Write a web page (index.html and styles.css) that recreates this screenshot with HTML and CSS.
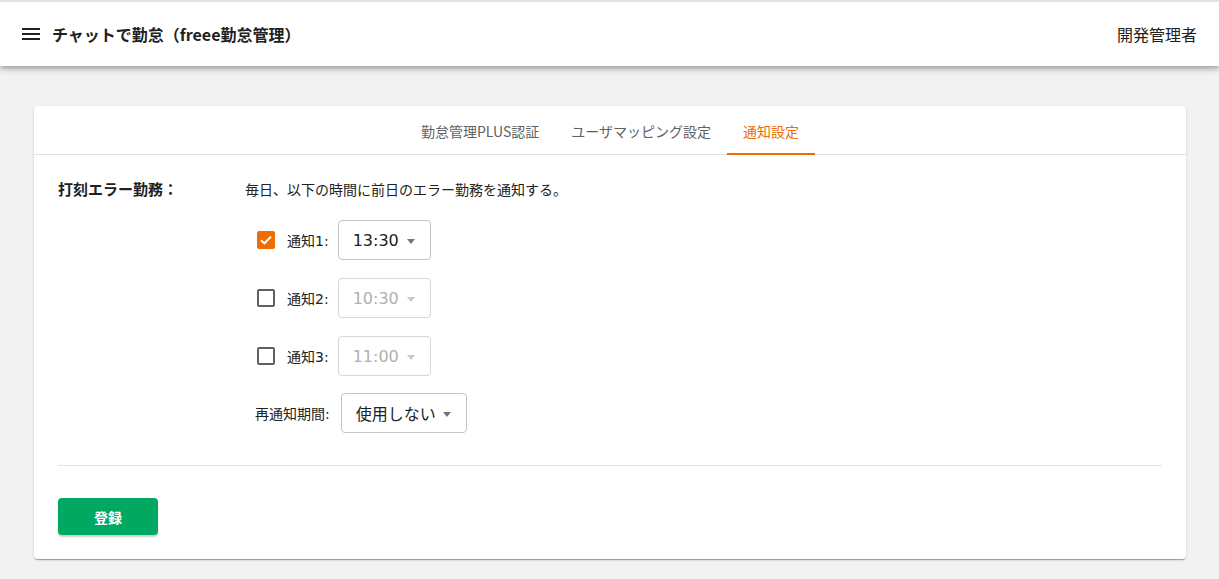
FILE: index.html
```html
<!doctype html>
<html lang="ja">
<head>
	<meta charset="UTF-8">
	<title>チャットで勤怠</title>
	<link rel="stylesheet" href="styles.css">
</head>
<body>
<header class="topbar">
	<div class="topbar_left">
		<span class="menu_icon">
			<svg width="18" height="12" viewBox="0 0 18 12"><rect x="0" y="0" width="18" height="2" fill="#212121"/><rect x="0" y="5" width="18" height="2" fill="#212121"/><rect x="0" y="10" width="18" height="2" fill="#212121"/></svg>
		</span>
		<h1 class="title">チャットで勤怠（freee勤怠管理）</h1>
	</div>
	<div class="user">開発管理者</div>
</header>

<main class="page">
	<div class="card">
		<nav class="tabs">
			<a class="tab">勤怠管理PLUS認証</a>
			<a class="tab">ユーザマッピング設定</a>
			<a class="tab active">通知設定</a>
		</nav>
		<div class="card_body">
			<div class="section">
				<div class="section_label">打刻エラー勤務：</div>
				<div class="section_main">
					<p class="desc">毎日、以下の時間に前日のエラー勤務を通知する。</p>

					<div class="row">
						<span class="check checked">
							<svg width="14" height="14" viewBox="0 0 14 14"><path d="M2 7.2 L5.4 10.4 L12 3.6" fill="none" stroke="#fff" stroke-width="2"/></svg>
						</span>
						<span class="row_label">通知1:</span>
						<div class="select">13:30<i class="arrow"></i></div>
					</div>

					<div class="row">
						<span class="check"></span>
						<span class="row_label">通知2:</span>
						<div class="select disabled">10:30<i class="arrow"></i></div>
					</div>

					<div class="row">
						<span class="check"></span>
						<span class="row_label">通知3:</span>
						<div class="select disabled">11:00<i class="arrow"></i></div>
					</div>

					<div class="row row_plain">
						<span class="row_label">再通知期間:</span>
						<div class="select wide">使用しない<i class="arrow"></i></div>
					</div>
				</div>
			</div>

			<hr class="divider">

			<button class="btn_submit">登録</button>
		</div>
	</div>
</main>
</body>
</html>
```

FILE: styles.css
```css
*{
	margin:0;
	padding:0;
	box-sizing:border-box;
}
body{
	background:#f2f2f2;
	font-family:"Noto Sans CJK JP","Noto Sans",sans-serif;
	color:#212121;
	font-size:14px;
}
.topbar{
	height:66px;
	border-top:2px solid #e3e3e3;
	background:#fff;
	display:flex;
	align-items:center;
	justify-content:space-between;
	padding:0 22px;
	box-shadow:0 2px 4px -1px rgba(0,0,0,.2),0 4px 5px 0 rgba(0,0,0,.14),0 1px 10px 0 rgba(0,0,0,.12);
	position:relative;
}
.topbar_left{
	display:flex;
	align-items:center;
}
.menu_icon{
	display:flex;
	margin-right:12px;
}
.title{
	font-size:16px;
	font-weight:bold;
	color:#212121;
}
.user{
	font-size:16px;
	color:#212121;
}
.page{
	padding:40px 33px 20px 34px;
}
.card{
	background:#fff;
	border-radius:4px;
	box-shadow:0 2px 1px -1px rgba(0,0,0,.2),0 1px 1px 0 rgba(0,0,0,.14),0 1px 3px 0 rgba(0,0,0,.12);
}
.tabs{
	display:flex;
	justify-content:center;
	height:49px;
	border-bottom:1px solid #e0e0e0;
}
.tab{
	padding:0 16px;
	display:flex;
	align-items:center;
	font-size:14px;
	color:#616161;
	border-bottom:2px solid transparent;
	margin-bottom:-1px;
	padding-top:2px;
}
.tab.active{
	color:#ef6c00;
	border-bottom-color:#ef6c00;
}
.card_body{
	padding:24px 24px 24px;
}
.section{
	display:flex;
}
.section_label{
	width:187px;
	font-size:15px;
	font-weight:bold;
	line-height:20px;
}
.section_main{
	display:flex;
	flex-direction:column;
	gap:18px;
}
.desc{
	line-height:20px;
	font-size:14px;
	margin-bottom:3px;
}
.row{
	display:flex;
	align-items:center;
	padding-left:12px;
}
.row_plain{
	padding-left:10px;
	margin-top:-1px;
}
.check{
	width:18px;
	height:18px;
	border:2px solid #616161;
	border-radius:2px;
	margin-right:12px;
	display:flex;
	align-items:center;
	justify-content:center;
}
.check.checked{
	background:#ef6c00;
	border-color:#ef6c00;
}
.row_label{
	font-family:"DejaVu Sans","Noto Sans CJK JP",sans-serif;
	font-size:14px;
	margin-right:9px;
	color:#212121;
}
.row_plain .row_label{
	margin-right:11px;
}
.select{
	width:93px;
	height:40px;
	border:1px solid #c4c4c4;
	border-radius:4px;
	display:flex;
	align-items:center;
	padding-left:14px;
	font-family:"DejaVu Sans","Noto Sans CJK JP",sans-serif;
	font-size:16px;
	color:#212121;
	position:relative;
}
.select.wide{
	width:126px;
}
.select.disabled{
	color:#b0b0b0;
	border-color:#d6d6d6;
}
.arrow{
	position:absolute;
	right:15px;
	top:18px;
	width:0;
	height:0;
	border-left:4px solid transparent;
	border-right:4px solid transparent;
	border-top:5px solid #757575;
}
.disabled .arrow{
	border-top-color:#c8c8c8;
}
.divider{
	border:0;
	border-top:1px solid #e0e0e0;
	margin-top:32px;
}
.btn_submit{
	margin-top:32px;
	width:100px;
	height:37px;
	border:0;
	border-radius:4px;
	background:#00a862;
	color:#fff;
	font-family:inherit;
	font-size:14px;
	font-weight:bold;
	box-shadow:0 2px 2px rgba(0,0,0,.2);
	display:block;
}
```
